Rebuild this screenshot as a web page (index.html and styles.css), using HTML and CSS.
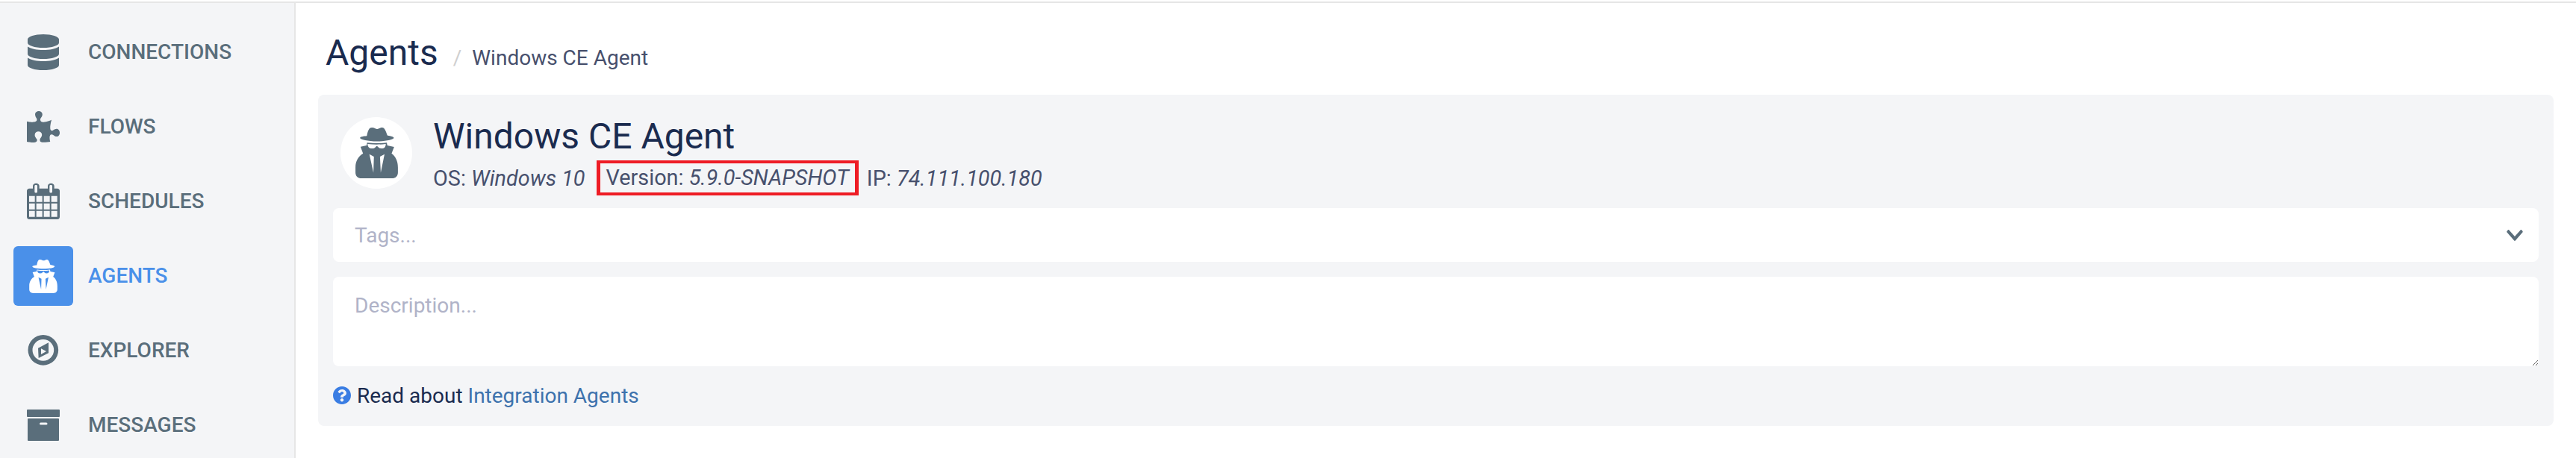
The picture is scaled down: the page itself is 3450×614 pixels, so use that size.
FILE: index.html
```html
<!DOCTYPE html>
<html lang="en">
<head>
<meta charset="utf-8">
<title>Windows CE Agent</title>
<link rel="stylesheet" href="styles.css">
</head>
<body>
<svg class="defs" width="0" height="0" aria-hidden="true">
  <symbol id="secret" viewBox="60 37 168 201">
    <path d="M105 70C110 45 115 37 125 37C135 37 140 43 146 43C152 43 158 37 166 37C175 37 180 50 186 68C202 71 212 74 212 78C212 85 180 92 145 92C110 92 78 85 78 78C78 74 88 71 105 70Z"/>
    <path fill-rule="evenodd" d="M106 97C130 100 160 100 184 97L186 108L213 114L203 140C218 150 228 170 228 195V215C228 230 218 238 205 238H83C70 238 60 230 60 215V195C60 170 72 150 90 140L80 113L104 108ZM108 102C108 113 114 120 126 120C138 120 140 112 145 110C150 112 152 120 163 120C175 120 180 113 180 102C155 105 133 105 108 102ZM115 143L133 152L131 216ZM175 143L157 152L160 216Z"/>
  </symbol>
</svg>
<div class="app">
  <nav class="sidebar">
    <a class="nav-item">
      <span class="nav-icon"><svg class="ico-db" viewBox="0 0 448 512"><path d="M448 73.143v45.714C448 159.143 347.667 192 224 192S0 159.143 0 118.857V73.143C0 32.857 100.333 0 224 0s224 32.857 224 73.143zM448 176v102.857C448 319.143 347.667 352 224 352S0 319.143 0 278.857V176c48.125 33.143 136.208 48.572 224 48.572S399.874 209.143 448 176zm0 160v102.857C448 479.143 347.667 512 224 512S0 479.143 0 438.857V336c48.125 33.143 136.208 48.572 224 48.572S399.874 369.143 448 336z"/></svg></span>
      <span class="nav-label">CONNECTIONS</span>
    </a>
    <a class="nav-item">
      <span class="nav-icon"><svg class="ico-puzzle" viewBox="0 0 576 512" preserveAspectRatio="none"><path d="M519.442 288.651c-41.519 0-59.5 31.593-82.058 31.593C377.409 320.244 432 144 432 144s-196.288 80-196.288-3.297c0-35.827 36.288-46.25 36.288-85.985C272 19.216 243.885 0 210.539 0c-34.654 0-66.366 18.891-66.366 56.346 0 41.364 31.711 59.277 31.711 81.75C175.885 207.719 0 166.758 0 166.758v333.237s178.635 41.047 178.635-28.662c0-22.473-40-40.107-40-81.471 0-37.456 29.25-56.346 63.577-56.346 33.673 0 61.788 19.216 61.788 54.717 0 39.735-36.288 50.158-36.288 85.985 0 60.803 129.675 25.73 181.23 25.73 0 0-34.725-120.101 25.827-120.101 35.962 0 46.423 36.152 86.308 36.152C556.712 416 576 387.99 576 354.443c0-34.199-18.962-65.792-56.558-65.792z"/></svg></span>
      <span class="nav-label">FLOWS</span>
    </a>
    <a class="nav-item">
      <span class="nav-icon"><svg class="ico-sixty" viewBox="-6 0 180 180"><path fill-rule="evenodd" d="M28 38H42V28C42 14 68 14 68 28V38H102V28C102 14 128 14 128 28V38H140C146 38 150 42 150 48V152C150 158 146 162 140 162H28C22 162 18 158 18 152V48C18 42 22 38 28 38ZM49 28V52C49 57 60 57 60 52V28C60 23 49 23 49 28ZM109 28V52C109 57 120 57 120 52V28C120 23 109 23 109 28ZM27 68V92H50V68ZM56 68V92H80V68ZM86 68V92H110V68ZM116 68V92H140V68ZM27 98V122H50V98ZM56 98V122H80V98ZM86 98V122H110V98ZM116 98V122H140V98ZM27 128V152H50V128ZM56 128V152H80V128ZM86 128V152H110V128ZM116 128V152H140V128Z"/></svg></span>
      <span class="nav-label">SCHEDULES</span>
    </a>
    <a class="nav-item active">
      <span class="nav-icon"><svg class="ico-secret-sm"><use href="#secret"/></svg></span>
      <span class="nav-label">AGENTS</span>
    </a>
    <a class="nav-item">
      <span class="nav-icon"><svg class="ico-sixty" viewBox="-6 0 180 180"><path fill-rule="evenodd" d="M83.5 27A61 61 0 1 1 83.5 149A61 61 0 1 1 83.5 27ZM83.5 45A43 43 0 1 0 83.5 131A43 43 0 1 0 83.5 45ZM105 58V100L65 120L63 80ZM75 82V105L96 93Z"/></svg></span>
      <span class="nav-label">EXPLORER</span>
    </a>
    <a class="nav-item">
      <span class="nav-icon"><svg class="ico-archive" viewBox="0 0 44 42"><path fill-rule="evenodd" d="M1 0H43A1 1 0 0 1 44 1V9A1 1 0 0 1 43 10H1A1 1 0 0 1 0 9V1A1 1 0 0 1 1 0ZM2 12H42A1 1 0 0 1 43 13V41A1 1 0 0 1 42 42H2A1 1 0 0 1 1 41V13A1 1 0 0 1 2 12ZM18.500 17.500A1.500 1.500 0 0 0 18.500 20.500H26A1.500 1.500 0 0 0 26 17.500Z"/></svg></span>
      <span class="nav-label">MESSAGES</span>
    </a>
  </nav>
  <main class="main">
    <header class="page-head">
      <h1 class="page-title">Agents</h1>
      <span class="crumb-sep">/</span>
      <span class="crumb">Windows CE Agent</span>
    </header>
    <section class="card">
      <div class="agent-head">
        <div class="avatar"><svg class="ico-secret-lg"><use href="#secret"/></svg></div>
        <div class="agent-info">
          <h2 class="agent-name">Windows CE Agent</h2>
          <div class="agent-meta">
            <span class="meta-item">OS: <em>Windows 10</em></span>
            <span class="meta-item meta-boxed">Version: <em>5.9.0-SNAPSHOT</em></span>
            <span class="meta-item">IP: <em>74.111.100.180</em></span>
          </div>
        </div>
      </div>
      <div class="tags">
        <span class="tags-placeholder">Tags...</span>
        <svg class="chevron" viewBox="0 0 448 512" preserveAspectRatio="none"><path d="M207.029 381.476L12.686 187.132c-9.373-9.373-9.373-24.569 0-33.941l22.667-22.667c9.357-9.357 24.522-9.375 33.901-.04L224 284.505l154.745-154.021c9.379-9.335 24.544-9.317 33.901.04l22.667 22.667c9.373 9.373 9.373 24.569 0 33.941L240.971 381.476c-9.373 9.372-24.569 9.372-33.942 0z"/></svg>
      </div>
      <textarea class="description" placeholder="Description..."></textarea>
      <p class="help">
        <svg class="help-icon" viewBox="8 8 496 496"><path d="M504 256c0 136.997-111.043 248-248 248S8 392.997 8 256C8 119.083 119.043 8 256 8s248 111.083 248 248zM262.655 90c-54.497 0-89.255 22.957-116.549 63.758-3.536 5.286-2.353 12.415 2.715 16.258l34.699 26.31c5.205 3.947 12.621 3.008 16.665-2.122 17.864-22.658 30.113-35.797 57.303-35.797 20.429 0 45.698 13.148 45.698 32.958 0 14.976-12.363 22.667-32.534 33.976C247.128 238.528 216 254.941 216 296v4c0 6.627 5.373 12 12 12h56c6.627 0 12-5.373 12-12v-1.333c0-28.462 83.186-29.647 83.186-106.667 0-58.002-60.165-102-116.531-102zM256 338c-25.365 0-46 20.635-46 46 0 25.364 20.635 46 46 46s46-20.636 46-46c0-25.365-20.635-46-46-46z"/></svg>
        <span>Read about <a class="help-link">Integration Agents</a></span>
      </p>
    </section>
  </main>
</div>
</body>
</html>
```
FILE: styles.css
```css
* { box-sizing: border-box; }
html, body { margin: 0; height: 614px; overflow: hidden; background: #fff; }
body { font-family: Roboto, "Liberation Sans", sans-serif; color: #1a2b4f; }
.defs { position: absolute; }
.app { display: flex; height: 614px; border-top: 2px solid #e6e6e6; margin-top: 2px; }

.sidebar { width: 396px; flex: none; background: #f4f5f7; border-right: 2px solid #e6e6e6; padding: 26px 18px 0; display: flex; flex-direction: column; gap: 20px; }
.nav-item { display: flex; align-items: center; height: 80px; color: #5a6e7b; }
.nav-icon { width: 80px; height: 80px; flex: none; border-radius: 6px; display: flex; align-items: center; justify-content: center; }
.nav-icon svg { fill: #5a6e7b; display: block; }
.nav-label { margin-left: 20px; padding-bottom: 2px; font-size: 28px; font-weight: 500; }
.ico-db { width: 42px; height: 48px; }
.ico-puzzle { width: 44px; height: 42px; }
.ico-sixty { width: 60px; height: 60px; }
.ico-archive { width: 44px; height: 42px; }
.ico-secret-sm { width: 38px; height: 45px; }
.ico-secret-lg { width: 57px; height: 68px; }
.nav-item.active { color: #4a90e9; }
.nav-item.active .nav-icon { background: #4a90e9; }
.nav-item.active .nav-icon svg { fill: #fff; }

.main { flex: 1; min-width: 0; padding: 0 30px; }
.page-head { display: flex; align-items: baseline; height: 123px; padding: 41px 0 0 10px; }
.page-title { margin: 0; font-size: 48px; line-height: 52px; font-weight: 400; color: #1a2b4f; }
.crumb-sep { margin-left: 20px; font-size: 28px; color: #cfcfcf; }
.crumb { margin-left: 14px; font-size: 28px; color: #47506d; }

.card { background: #f4f5f7; border-radius: 8px; padding: 20px 20px 22px; }
.agent-head { display: flex; gap: 28px; padding: 10px 0 0 10px; margin-bottom: 17px; }
.avatar { width: 96px; height: 96px; flex: none; border-radius: 50%; background: #fff; display: flex; align-items: center; justify-content: center; }
.avatar svg { fill: #5a6e7b; display: block; }
.agent-name { margin: 0; font-size: 48px; line-height: 52px; font-weight: 400; color: #1a2b4f; }
.agent-meta { display: flex; align-items: center; gap: 11px; margin-top: 6px; font-size: 28.8px; color: #47506d; white-space: nowrap; }
.meta-boxed { height: 47px; margin-left: 4px; display: block; line-height: 39px; border-style: solid; border-color: #ee1c25; border-width: 4px 5px; padding: 0 8px; }
.meta-item em { font-style: italic; }

.tags { height: 72px; background: #fff; border-radius: 8px; display: flex; align-items: center; justify-content: space-between; padding: 0 21px 0 29px; margin-bottom: 20px; }
.tags-placeholder { font-size: 28px; color: #b0b3c8; }
.chevron { width: 22px; height: 29px; fill: #5a6e7b; }
.description { display: block; width: 100%; height: 120px; border: 0; border-radius: 8px; background: #fff; padding: 20px 29px; font-family: Roboto, "Liberation Sans", sans-serif; font-size: 28px; line-height: 38px; resize: vertical; outline: none; }
.description::placeholder { color: #b0b3c8; opacity: 1; }

.help { display: flex; align-items: center; gap: 8px; height: 38px; margin: 20px 0 0; font-size: 28px; color: #1a2b4f; }
.help-icon { width: 24px; height: 24px; fill: #3a7de3; flex: none; }
.help-link { color: #3d72ad; }
```
